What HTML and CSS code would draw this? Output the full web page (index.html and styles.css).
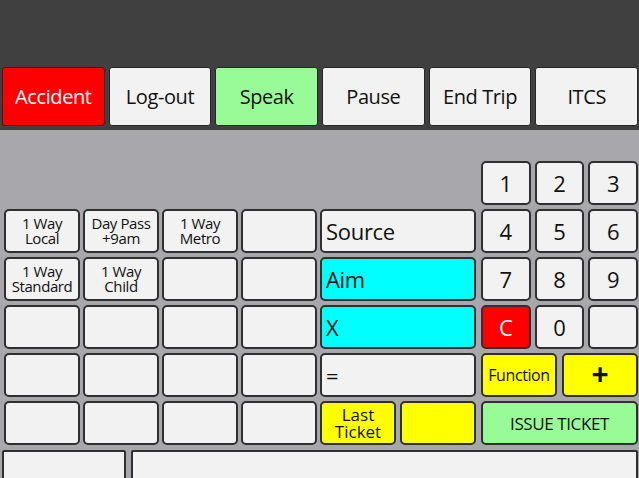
FILE: index.html
```html
<!DOCTYPE html>
<html>
<head>
<meta charset="utf-8">
<link rel="stylesheet" href="styles.css">
</head>
<body>
<div class="screen">
  <div class="topbar">
    <div class="tbtn red">Accident</div>
    <div class="tbtn">Log-out</div>
    <div class="tbtn green">Speak</div>
    <div class="tbtn">Pause</div>
    <div class="tbtn">End Trip</div>
    <div class="tbtn">ITCS</div>
  </div>
  <div class="main">
    <div class="panels">
      <div class="tickets">
        <div class="cell small">1 Way<br>Local</div>
        <div class="cell small">Day Pass<br>+9am</div>
        <div class="cell small">1 Way<br>Metro</div>
        <div class="cell"></div>
        <div class="cell small">1 Way<br>Standard</div>
        <div class="cell small">1 Way<br>Child</div>
        <div class="cell"></div>
        <div class="cell"></div>
        <div class="cell"></div>
        <div class="cell"></div>
        <div class="cell"></div>
        <div class="cell"></div>
        <div class="cell"></div>
        <div class="cell"></div>
        <div class="cell"></div>
        <div class="cell"></div>
        <div class="cell"></div>
        <div class="cell"></div>
        <div class="cell"></div>
        <div class="cell"></div>
      </div>
      <div class="fields">
        <div class="cell field">Source</div>
        <div class="cell field cyan">Aim</div>
        <div class="cell field cyan">X</div>
        <div class="cell field">=</div>
        <div class="split">
          <div class="cell yellow last">Last<br>Ticket</div>
          <div class="cell yellow"></div>
        </div>
      </div>
      <div class="keypad">
        <div class="krow">
          <div class="cell key">1</div><div class="cell key">2</div><div class="cell key">3</div>
        </div>
        <div class="krow">
          <div class="cell key">4</div><div class="cell key">5</div><div class="cell key">6</div>
        </div>
        <div class="krow">
          <div class="cell key">7</div><div class="cell key">8</div><div class="cell key">9</div>
        </div>
        <div class="krow">
          <div class="cell key red">C</div><div class="cell key">0</div><div class="cell key"></div>
        </div>
        <div class="krow wide">
          <div class="cell yellow func">Function</div><div class="cell yellow plus">+</div>
        </div>
        <div class="krow">
          <div class="cell green issue">ISSUE TICKET</div>
        </div>
      </div>
    </div>
    <div class="status">
      <div class="strip s1"></div>
      <div class="strip s2"></div>
    </div>
  </div>
</div>
</body>
</html>
```
FILE: styles.css
```css
html, body {
  margin: 0;
  padding: 0;
  width: 639px;
  height: 478px;
  overflow: hidden;
}
body {
  font-family: "Open Sans", "Noto Sans", sans-serif;
  color: #111;
}
.screen {
  width: 639px;
  height: 478px;
  display: flex;
  flex-direction: column;
  overflow: hidden;
}
.topbar {
  flex: 0 0 130px;
  height: 130px;
  box-sizing: border-box;
  background: #404040;
  padding: 67px 1px 0 2px;
  display: flex;
  align-items: flex-start;
  gap: 4px;
}
.tbtn {
  flex: 1;
  height: 59px;
  box-sizing: border-box;
  background: #f2f2f2;
  border: 1px solid #262626;
  border-radius: 3px;
  display: flex;
  align-items: center;
  justify-content: center;
  font-size: 20px;
  letter-spacing: -0.4px;
}
.main {
  flex: 1 0 auto;
  background: #a8a7ac;
  padding: 31px 0 0 0;
  display: flex;
  flex-direction: column;
}
.panels {
  display: flex;
  align-items: flex-end;
  padding-left: 4px;
}
.cell {
  box-sizing: border-box;
  background: #f2f2f2;
  border: 2px solid #303030;
  border-radius: 5px;
  height: 44px;
  display: flex;
  align-items: center;
  justify-content: center;
  text-align: center;
}
.tbtn.red, .cell.red { background: #ff0000; color: #fff; }
.tbtn.green, .cell.green { background: #98fb98; }
.cell.cyan { background: #00ffff; }
.cell.yellow { background: #ffff00; }
.tickets {
  width: 313px;
  display: grid;
  grid-template-columns: repeat(4, 76px);
  grid-auto-rows: 44px;
  column-gap: 3px;
  row-gap: 4px;
}
.small {
  font-size: 15px;
  line-height: 15px;
  letter-spacing: -0.4px;
}
.fields {
  width: 156px;
  margin-left: 3px;
  display: flex;
  flex-direction: column;
  gap: 4px;
}
.field {
  justify-content: flex-start;
  padding-left: 4px;
  font-size: 22px;
  letter-spacing: -0.3px;
}
.split {
  display: flex;
  gap: 4px;
}
.split .cell {
  flex: 1;
}
.last {
  font-size: 17px;
  line-height: 17px;
}
.keypad {
  width: 157px;
  margin-left: 5px;
  display: flex;
  flex-direction: column;
  gap: 4px;
}
.krow {
  display: flex;
  gap: 4px;
}
.krow .cell {
  flex: 1;
}
.krow.wide {
  gap: 5px;
}
.key {
  font-size: 22px;
}
.func {
  font-size: 16px;
  letter-spacing: -0.4px;
}
.plus {
  font-size: 30px;
  font-weight: 700;
  line-height: 1;
  padding-bottom: 2px;
}
.issue {
  font-size: 17px;
  letter-spacing: -0.4px;
}
.status {
  display: flex;
  gap: 5px;
  padding: 5px 1px 0 2px;
}
.strip {
  box-sizing: border-box;
  height: 32px;
  background: #f2f2f2;
  border: 2px solid #303030;
  border-radius: 2px;
}
.s1 { width: 124px; }
.s2 { flex: 1; }
```
